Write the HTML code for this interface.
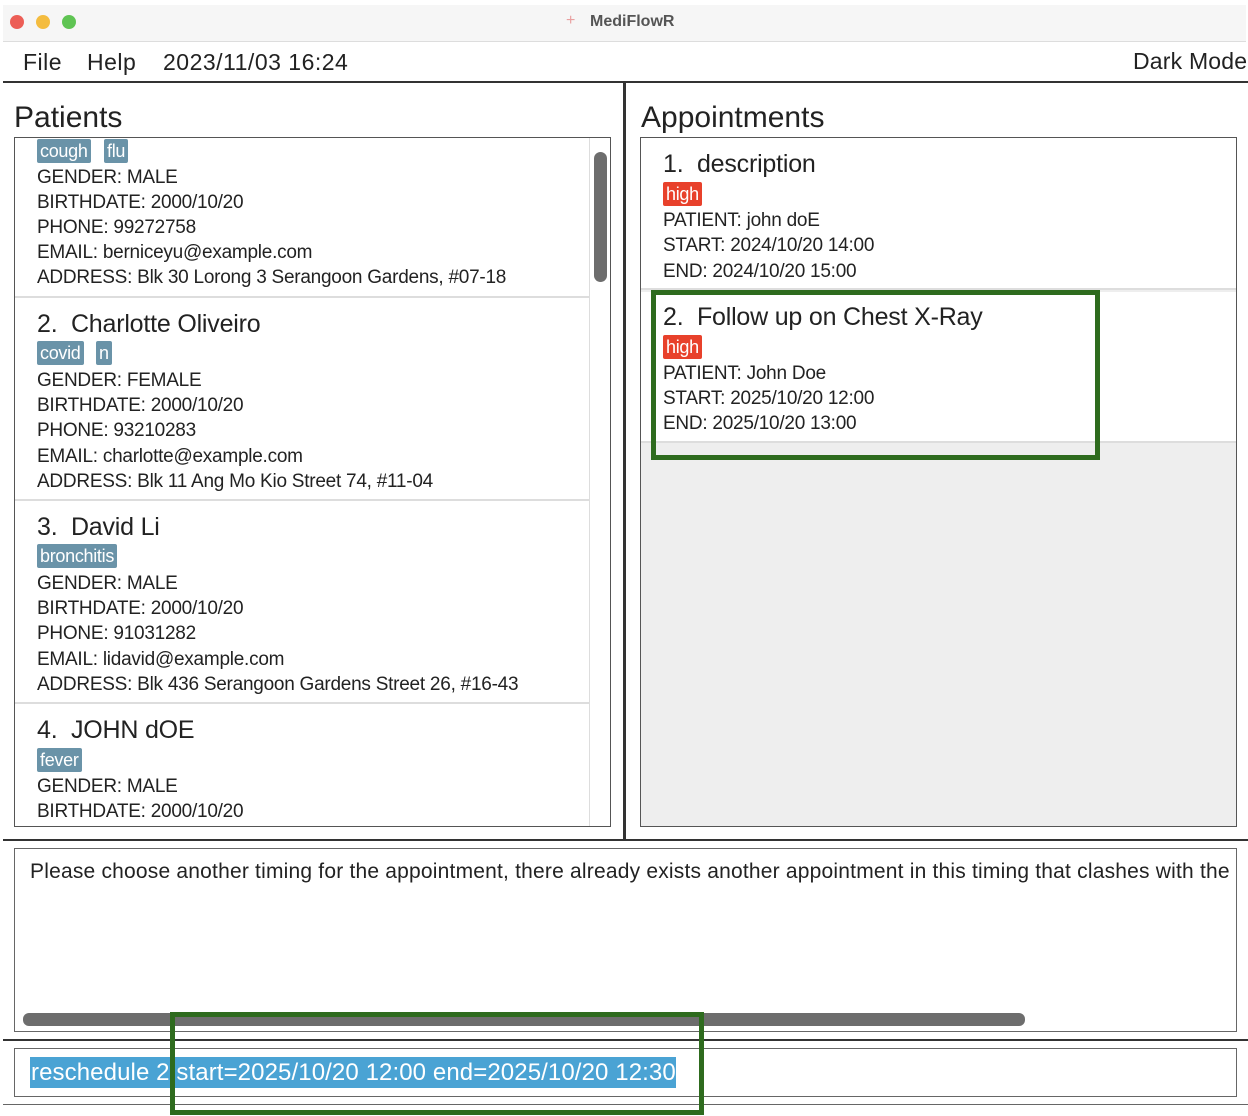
<!DOCTYPE html>
<html><head><meta charset="utf-8"><style>
*{margin:0;padding:0;box-sizing:border-box}
body{width:1248px;height:1116px;background:#fff;font-family:"Liberation Sans",sans-serif;color:#222;position:relative;overflow:hidden}
.a{position:absolute;white-space:nowrap}
.t{font-size:19px;letter-spacing:-0.25px;line-height:24px;height:24px;margin-top:2px}
.h{font-size:25px;letter-spacing:-0.2px;line-height:30px;margin-top:1px}
.tag{position:absolute;background:#6a93a8;color:#fff;font-size:18px;letter-spacing:-0.3px;line-height:24px;height:24px;padding:0 3px;border-radius:2px}
.red{background:#e8412b}
.m{font-size:23px;letter-spacing:0.5px}
</style></head><body>
<div class="a" style="left:3px;top:5px;width:1243px;height:37px;background:#f6f6f6;border-bottom:1px solid #ddd"></div>
<div class="a" style="left:10px;top:15px;width:14px;height:14px;border-radius:50%;background:#ec5e56"></div>
<div class="a" style="left:36px;top:15px;width:14px;height:14px;border-radius:50%;background:#f4bc3f"></div>
<div class="a" style="left:62px;top:15px;width:14px;height:14px;border-radius:50%;background:#5fc453"></div>
<div class="a" style="left:566px;top:12px;font-size:16px;color:#e9a0a0">+</div>
<div class="a" style="left:590px;top:13px;font-size:16px;font-weight:bold;color:#555">MediFlowR</div>
<div class="a m" style="left:23px;top:49px">File</div>
<div class="a m" style="left:87px;top:49px">Help</div>
<div class="a m" style="left:163px;top:49px">2023/11/03 16:24</div>
<div class="a" style="left:1133px;top:48px;font-size:23px;letter-spacing:0.2px">Dark Mode</div>
<div class="a" style="left:3px;top:81px;width:1245px;height:2px;background:#333"></div>
<div class="a" style="left:623px;top:82px;width:3px;height:758px;background:#333"></div>
<div class="a" style="left:14px;top:101px;font-size:30px;letter-spacing:0px">Patients</div>
<div class="a" style="left:14px;top:137px;width:597px;height:690px;border:1px solid #555;overflow:hidden">
<div class="a" style="left:574px;top:0;width:1px;height:690px;background:#ddd"></div>
<div class="a" style="left:579px;top:14px;width:13px;height:130px;border-radius:7px;background:#6d6d6d"></div>
<div class="a" style="left:0;top:158px;width:574px;height:2px;background:#ddd"></div>
<div class="a" style="left:0;top:361px;width:574px;height:2px;background:#ddd"></div>
<div class="a" style="left:0;top:564px;width:574px;height:2px;background:#ddd"></div>
</div>
<div class="tag" style="left:37px;top:139px">cough</div>
<div class="tag" style="left:104px;top:139px">flu</div>
<div class="a t" style="left:37px;top:164px">GENDER: MALE</div>
<div class="a t" style="left:37px;top:189px">BIRTHDATE: 2000/10/20</div>
<div class="a t" style="left:37px;top:214px">PHONE: 99272758</div>
<div class="a t" style="left:37px;top:239px">EMAIL: berniceyu@example.com</div>
<div class="a t" style="left:37px;top:264px">ADDRESS: Blk 30 Lorong 3 Serangoon Gardens, #07-18</div>

<div class="a h" style="left:37px;top:308px">2.&nbsp; Charlotte Oliveiro</div>
<div class="tag" style="left:37px;top:341px">covid</div>
<div class="tag" style="left:96px;top:341px">n</div>
<div class="a t" style="left:37px;top:367px">GENDER: FEMALE</div>
<div class="a t" style="left:37px;top:392px">BIRTHDATE: 2000/10/20</div>
<div class="a t" style="left:37px;top:417px">PHONE: 93210283</div>
<div class="a t" style="left:37px;top:443px">EMAIL: charlotte@example.com</div>
<div class="a t" style="left:37px;top:468px">ADDRESS: Blk 11 Ang Mo Kio Street 74, #11-04</div>

<div class="a h" style="left:37px;top:511px">3.&nbsp; David Li</div>
<div class="tag" style="left:37px;top:544px">bronchitis</div>
<div class="a t" style="left:37px;top:570px">GENDER: MALE</div>
<div class="a t" style="left:37px;top:595px">BIRTHDATE: 2000/10/20</div>
<div class="a t" style="left:37px;top:620px">PHONE: 91031282</div>
<div class="a t" style="left:37px;top:646px">EMAIL: lidavid@example.com</div>
<div class="a t" style="left:37px;top:671px">ADDRESS: Blk 436 Serangoon Gardens Street 26, #16-43</div>

<div class="a h" style="left:37px;top:714px">4.&nbsp; JOHN dOE</div>
<div class="tag" style="left:37px;top:748px">fever</div>
<div class="a t" style="left:37px;top:773px">GENDER: MALE</div>
<div class="a t" style="left:37px;top:798px">BIRTHDATE: 2000/10/20</div>

<div class="a" style="left:641px;top:101px;font-size:30px;letter-spacing:0px">Appointments</div>
<div class="a" style="left:640px;top:137px;width:597px;height:690px;border:1px solid #555;background:#eeeeee">
<div class="a" style="left:0;top:0;width:595px;height:152px;background:#fff;border-bottom:2px solid #ddd"></div>
<div class="a" style="left:0;top:154px;width:595px;height:151px;background:#fff;border-bottom:2px solid #ddd"></div>
</div>
<div class="a h" style="left:663px;top:148px">1.&nbsp; description</div>
<div class="tag red" style="left:663px;top:182px">high</div>
<div class="a t" style="left:663px;top:207px">PATIENT: john doE</div>
<div class="a t" style="left:663px;top:232px">START: 2024/10/20 14:00</div>
<div class="a t" style="left:663px;top:258px">END: 2024/10/20 15:00</div>
<div class="a h" style="left:663px;top:301px">2.&nbsp; Follow up on Chest X-Ray</div>
<div class="tag red" style="left:663px;top:335px">high</div>
<div class="a t" style="left:663px;top:360px">PATIENT: John Doe</div>
<div class="a t" style="left:663px;top:385px">START: 2025/10/20 12:00</div>
<div class="a t" style="left:663px;top:410px">END: 2025/10/20 13:00</div>
<div class="a" style="left:651px;top:290px;width:449px;height:170px;border:5px solid #2e6b1e"></div>

<div class="a" style="left:3px;top:839px;width:1245px;height:2px;background:#333"></div>
<div class="a" style="left:14px;top:848px;width:1223px;height:184px;border:1px solid #666;overflow:hidden">
<div class="a" style="left:15px;top:10px;font-size:21px;letter-spacing:0.2px;line-height:26px">Please choose another timing for the appointment, there already exists another appointment in this timing that clashes with the</div>
<div class="a" style="left:8px;top:164px;width:1002px;height:13px;border-radius:6px;background:#6d6d6d"></div>
</div>
<div class="a" style="left:3px;top:1039px;width:1245px;height:2px;background:#333"></div>
<div class="a" style="left:14px;top:1048px;width:1223px;height:49px;border:1px solid #666"></div>
<div class="a" style="left:30px;top:1057px;width:646px;height:31px;background:#4aa3d4"></div>
<div class="a" style="left:31px;top:1059px;font-size:24px;letter-spacing:0.1px;color:#fff;line-height:28px">reschedule 2 start=2025/10/20 12:00 end=2025/10/20 12:30</div>
<div class="a" style="left:3px;top:1104px;width:1245px;height:1px;background:#666"></div>
<div class="a" style="left:170px;top:1012px;width:534px;height:103px;border:5px solid #2e6b1e"></div>
</body></html>
